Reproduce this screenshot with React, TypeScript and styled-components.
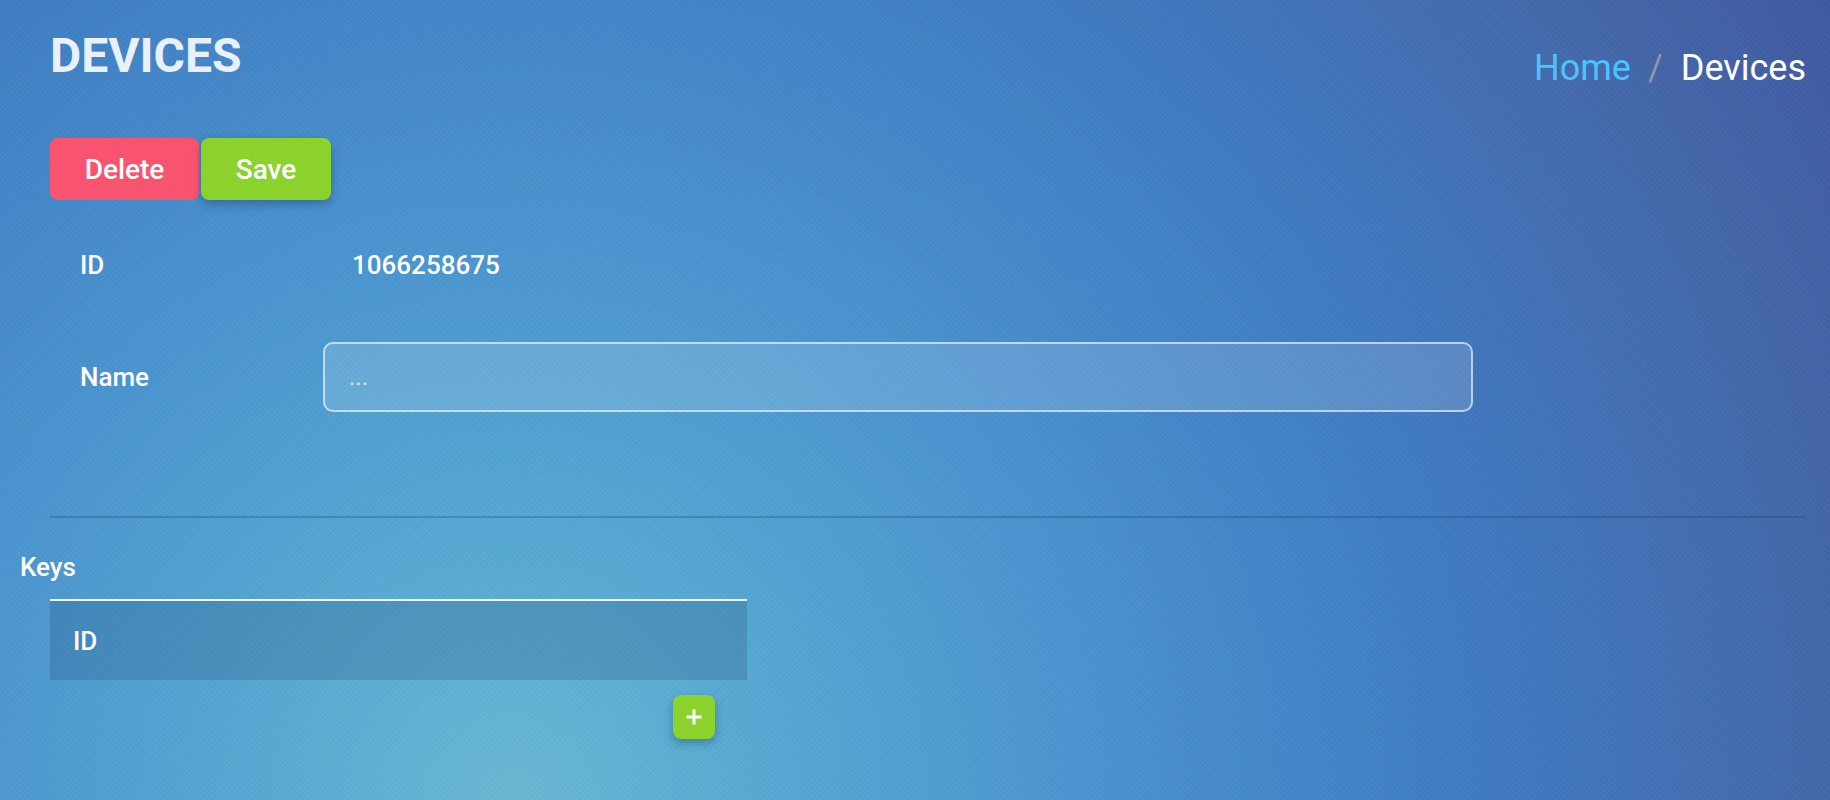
import React from "react";
import styled, { createGlobalStyle } from "styled-components";

const GlobalStyle = createGlobalStyle`
  html, body {
    margin: 0;
    padding: 0;
  }
  body {
    font-family: Roboto, "Noto Sans", "Liberation Sans", sans-serif;
    background: #3f7cc2;
  }
  * { box-sizing: border-box; }
`;

const Page = styled.div`
  min-height: 800px;
  padding: 32px 24px 40px 50px;
  color: #ffffff;
  background:
    repeating-linear-gradient(45deg, rgba(255,255,255,0.025) 0 1px, transparent 1px 4px),
    repeating-linear-gradient(-45deg, rgba(0,0,0,0.025) 0 1px, transparent 1px 4px),
    radial-gradient(circle at 510px 800px, #68b8d2 0px, #55a6d2 300px, #4a94cf 570px, #3f7cc2 950px, #4468aa 1320px, #3f56a0 1600px);
`;

const Header = styled.header`
  display: flex;
  justify-content: space-between;
  align-items: flex-start;
  height: 48px;
`;

const Title = styled.h1`
  margin: 0;
  font-size: 48px;
  line-height: 1;
  font-weight: 700;
  color: #e8f0fa;
`;

const Breadcrumb = styled.nav`
  display: flex;
  align-items: baseline;
  margin-top: 18px;
  font-size: 36px;
  line-height: 1;
  font-weight: 400;
`;

const Crumb = styled.span<{ $active?: boolean }>`
  color: ${(p) => (p.$active ? "#ffffff" : "#4cc3ff")};
`;

const Separator = styled.span`
  color: #8d97a6;
  padding: 0 18px 0 17px;
`;

const Toolbar = styled.div`
  display: flex;
  gap: 2px;
  margin-top: 58px;
`;

const ActionButton = styled.button<{ $variant: "danger" | "success"; $width: number }>`
  width: ${(p) => p.$width}px;
  height: 62px;
  border: none;
  border-radius: 8px;
  font-family: Roboto, "Noto Sans", sans-serif;
  font-size: 28px;
  font-weight: 500;
  color: #ffffff;
  cursor: pointer;
  background: ${(p) => (p.$variant === "danger" ? "#f8546f" : "#8bd32c")};
  box-shadow: ${(p) =>
    p.$variant === "success" ? "0 4px 8px rgba(20, 40, 80, 0.35)" : "none"};
`;

const Form = styled.div`
  display: flex;
  flex-direction: column;
  gap: 42px;
  margin-top: 30px;
  padding-left: 30px;
`;

const FieldRow = styled.div`
  display: grid;
  grid-template-columns: 243px 1150px;
  align-items: center;
  height: 70px;
`;

const Label = styled.span`
  font-size: 26px;
  font-weight: 500;
`;

const StaticValue = styled.span`
  font-size: 26px;
  font-weight: 500;
  padding-left: 29px;
`;

const TextInput = styled.input`
  width: 100%;
  height: 70px;
  padding: 0 24px;
  border: 2px solid rgba(255, 255, 255, 0.6);
  border-radius: 10px;
  background: rgba(255, 255, 255, 0.14);
  color: #ffffff;
  font-family: Roboto, "Noto Sans", sans-serif;
  font-size: 24px;
  outline: none;
  &::placeholder {
    color: rgba(255, 255, 255, 0.75);
  }
`;

const Divider = styled.hr`
  margin: 104px 0 0 0;
  border: none;
  height: 2px;
  background: rgba(20, 60, 110, 0.28);
`;

const SectionTitle = styled.h2`
  margin: 36px 0 0 -30px;
  font-size: 26px;
  line-height: 1;
  font-weight: 500;
`;

const TableBlock = styled.div`
  width: 697px;
  margin-top: 19px;
  display: flex;
  flex-direction: column;
`;

const Table = styled.table`
  width: 100%;
  border-collapse: collapse;
  border-top: 2px solid #f2f4f6;
`;

const HeadCell = styled.th`
  height: 80px;
  padding: 0 23px;
  text-align: left;
  font-size: 26px;
  font-weight: 500;
  color: #ffffff;
  background: rgba(30, 70, 110, 0.22);
`;

const AddButton = styled.button`
  align-self: flex-end;
  margin: 15px 32px 0 0;
  width: 42px;
  height: 44px;
  border: none;
  border-radius: 8px;
  background: #8bd32c;
  display: flex;
  align-items: center;
  justify-content: center;
  padding: 0;
  cursor: pointer;
  box-shadow: 0 4px 8px rgba(20, 40, 80, 0.35);
`;

export default function App() {
  return (
    <>
      <GlobalStyle />
      <Page>
        <Header>
          <Title>DEVICES</Title>
          <Breadcrumb>
            <Crumb>Home</Crumb>
            <Separator>/</Separator>
            <Crumb $active>Devices</Crumb>
          </Breadcrumb>
        </Header>

        <Toolbar>
          <ActionButton $variant="danger" $width={149}>Delete</ActionButton>
          <ActionButton $variant="success" $width={130}>Save</ActionButton>
        </Toolbar>

        <Form>
          <FieldRow>
            <Label>ID</Label>
            <StaticValue>1066258675</StaticValue>
          </FieldRow>
          <FieldRow>
            <Label>Name</Label>
            <TextInput placeholder="..." />
          </FieldRow>
        </Form>

        <Divider />

        <SectionTitle>Keys</SectionTitle>
        <TableBlock>
          <Table>
            <thead>
              <tr>
                <HeadCell>ID</HeadCell>
              </tr>
            </thead>
          </Table>
          <AddButton aria-label="Add key">
            <svg width="18" height="18" viewBox="0 0 18 18">
              <path d="M9 1.5v15M1.5 9h15" stroke="#ffffff" strokeWidth="3" fill="none" />
            </svg>
          </AddButton>
        </TableBlock>
      </Page>
    </>
  );
}
